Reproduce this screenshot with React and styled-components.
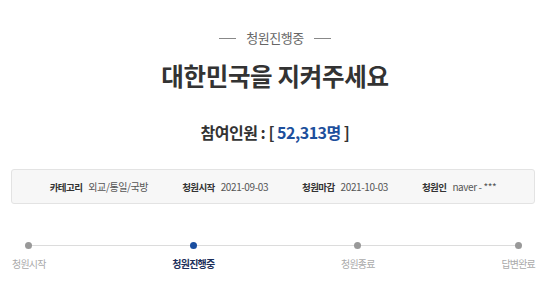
import React from 'react';
import styled, { createGlobalStyle } from 'styled-components';

const GlobalStyle = createGlobalStyle`
    body {
        margin: 0;
        background: #fff;
        font-family: "Noto Sans CJK KR", "Noto Sans", sans-serif;
    }
`;

const Page = styled.div`
    width: 550px;
    padding-top: 28px;
`;

const Status = styled.div`
    display: flex;
    align-items: center;
    justify-content: center;
    gap: 10px;
    font-size: 13px;
    line-height: 20px;
    letter-spacing: -0.5px;
    color: #666;

    &::before,
    &::after {
        content: '';
        width: 17px;
        height: 1px;
        background: #888;
    }
`;

const Title = styled.h1`
    margin: 12px 0 0;
    text-align: center;
    font-size: 24.5px;
    line-height: 32px;
    font-weight: 700;
    letter-spacing: -0.3px;
    color: #333;
`;

const Count = styled.div`
    margin-top: 30px;
    text-align: center;
    font-size: 16px;
    line-height: 20px;
    font-weight: 700;
    letter-spacing: -0.5px;
    color: #333;
`;

const Number = styled.span`
    color: #1d4f9c;
`;

const InfoBox = styled.div`
    margin: 27px 15px 0 11px;
    height: 35px;
    box-sizing: border-box;
    border: 1px solid #e3e3e3;
    border-radius: 3px;
    background: #f7f7f7;
    display: flex;
    align-items: center;
    justify-content: center;
    gap: 34px;
`;

const InfoItem = styled.div`
    display: flex;
    align-items: baseline;
    gap: 6px;
    font-size: 9.5px;
    letter-spacing: -0.6px;
    white-space: nowrap;
`;

const Label = styled.span`
    font-weight: 700;
    color: #333;
`;

const Value = styled.span`
    font-size: 10px;
    color: #555;
    letter-spacing: -0.4px;
`;

const Steps = styled.div`
    position: relative;
    margin: 38px 15px 0 12px;
    display: flex;
    justify-content: space-between;

    &::before {
        content: '';
        position: absolute;
        top: 3px;
        left: 17px;
        right: 17px;
        height: 1px;
        background: #dcdcdc;
    }
`;

const Step = styled.div`
    position: relative;
    display: flex;
    flex-direction: column;
    align-items: center;
    gap: 8px;
`;

const Dot = styled.span`
    width: 7px;
    height: 7px;
    border-radius: 50%;
    background: ${p => (p.active ? '#1a4ea0' : '#999')};
`;

const StepLabel = styled.span`
    font-size: 10px;
    line-height: 14px;
    letter-spacing: -0.8px;
    font-weight: ${p => (p.active ? 700 : 400)};
    color: ${p => (p.active ? '#1c2f5a' : '#aaa')};
`;

const info = [
    ['카테고리', '외교/통일/국방'],
    ['청원시작', '2021-09-03'],
    ['청원마감', '2021-10-03'],
    ['청원인', 'naver - ***'],
];

const steps = ['청원시작', '청원진행중', '청원종료', '답변완료'];

export default function App() {
    return (
        <Page>
            <GlobalStyle />
            <Status>청원진행중</Status>
            <Title>대한민국을 지켜주세요</Title>
            <Count>
                참여인원 : [ <Number>52,313명</Number> ]
            </Count>
            <InfoBox>
                {info.map(([label, value]) => (
                    <InfoItem key={label}>
                        <Label>{label}</Label>
                        <Value>{value}</Value>
                    </InfoItem>
                ))}
            </InfoBox>
            <Steps>
                {steps.map((s, i) => (
                    <Step key={s}>
                        <Dot active={i === 1} />
                        <StepLabel active={i === 1}>{s}</StepLabel>
                    </Step>
                ))}
            </Steps>
        </Page>
    );
}
